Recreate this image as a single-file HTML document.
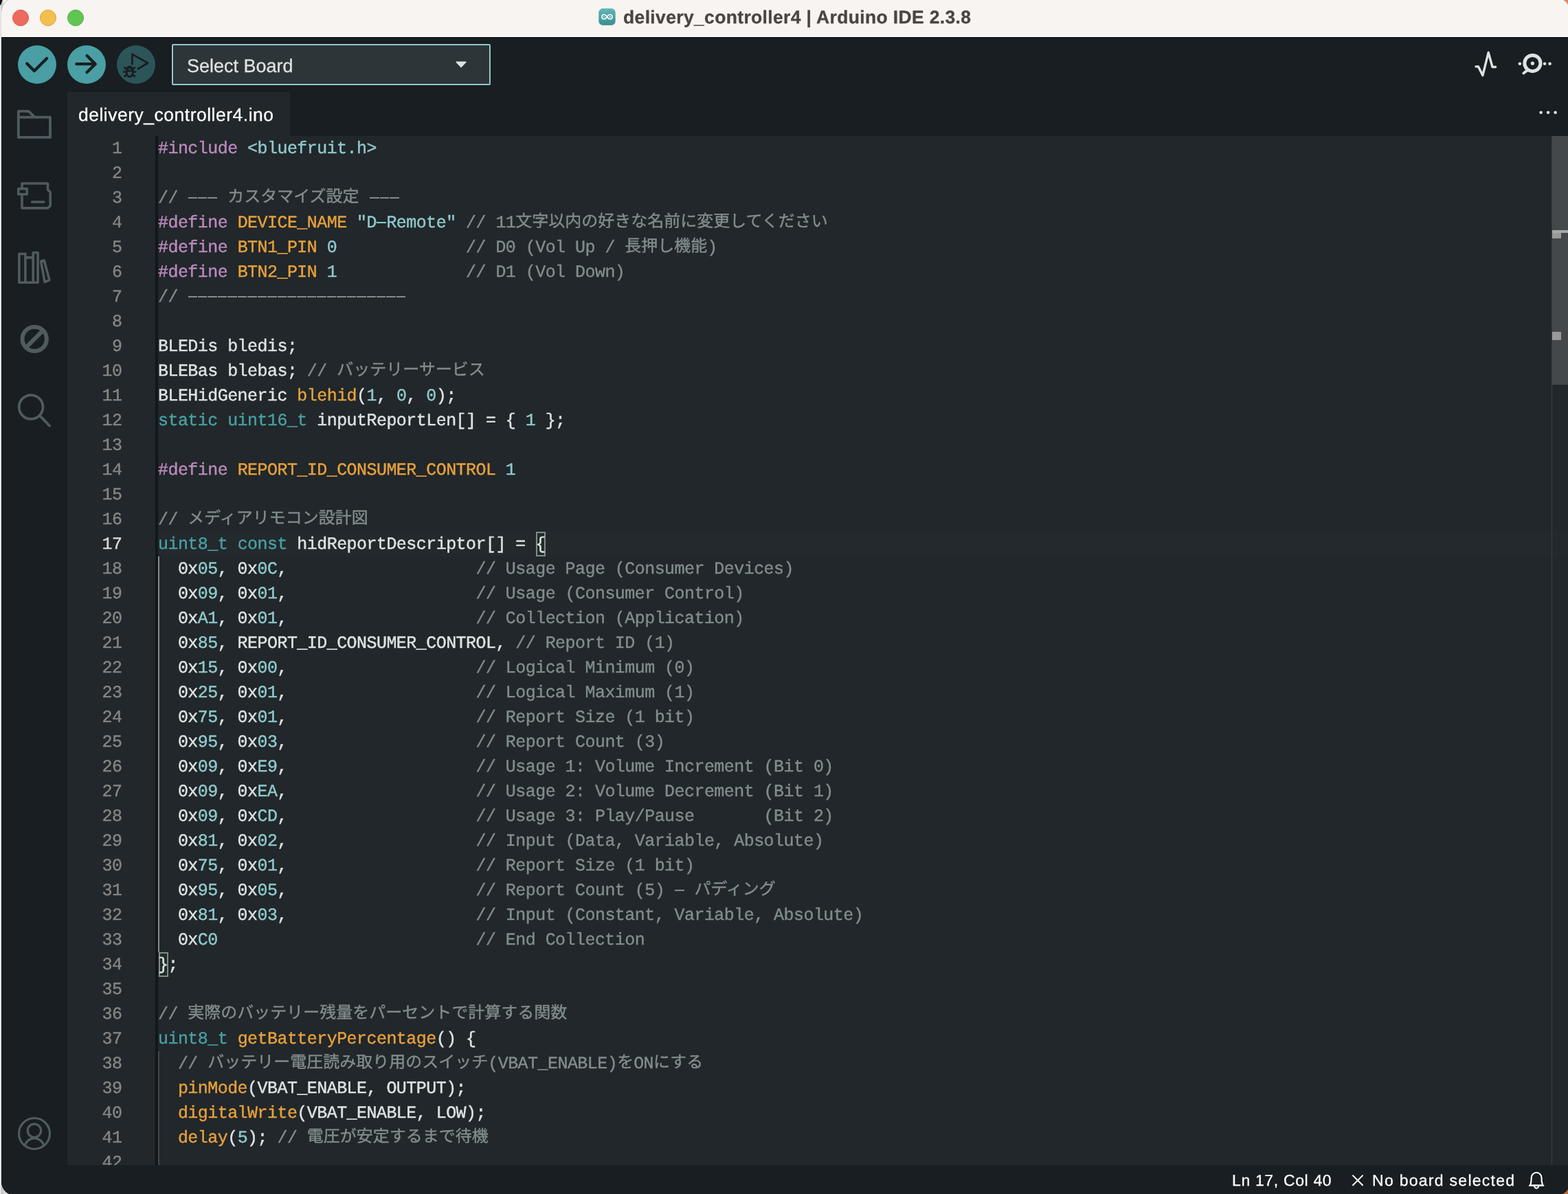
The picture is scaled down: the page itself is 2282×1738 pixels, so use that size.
<!DOCTYPE html>
<html lang="en">
<head>
<meta charset="utf-8">
<title>delivery_controller4 | Arduino IDE 2.3.8</title>
<style>
*{box-sizing:border-box;margin:0;padding:0}
html,body{width:2282px;height:1738px;overflow:hidden}
body{text-rendering:geometricPrecision;position:relative;font-family:"Liberation Sans",sans-serif;background:#d6d6d6;-webkit-font-smoothing:antialiased}
/* desktop / other window peeking behind */
#behind-l{position:absolute;left:0;top:0;width:24px;height:1738px;background:linear-gradient(90deg,#f8f8f8 0,#c2c2c2 2.500px,rgba(210,210,210,0) 6px),linear-gradient(180deg,#f6f6f6 0,#f6f6f6 30px,#d6d6d6 220px)}
#behind-mark{position:absolute;left:-3px;top:-5px;width:6px;height:13px;background:#111;border-radius:3px;transform:rotate(18deg)}
#behind-r{position:absolute;right:0;top:0;width:30px;height:40px;background:#e08a5c}
#behind-br{position:absolute;right:0;bottom:0;width:30px;height:40px;background:#c4673a}
#win{position:absolute;left:2px;top:-3px;width:2283px;height:1743px;border-radius:20px;overflow:hidden;background:#181e21}
/* everything inside #win is positioned in page coordinates via #pg */
#pg{position:absolute;left:-2px;top:3px;width:2290px;height:1745px}
#titlebar{position:absolute;left:0;top:-3px;width:2290px;height:56px;background:#f8f4f1}
#tb-hi{position:absolute;left:0;top:53px;width:2290px;height:1px;background:#fdfcfb}
#tb-sep{position:absolute;left:0;top:54px;width:2290px;height:1px;background:#000}
.tl{position:absolute;top:14px;width:24px;height:24px;border-radius:50%}
#tl-r{left:18px;background:#ed6a5e;border:1px solid #d8574b}
#tl-y{left:58px;background:#f4bf4f;border:1px solid #d9a33c}
#tl-g{left:98px;background:#61c554;border:1px solid #4fae43}
#title{position:absolute;left:907.300px;top:8.500px;height:32px;line-height:32px;font-size:26.5px;letter-spacing:0.35px;font-weight:bold;color:#484543;-webkit-text-stroke:0.3px #484543;white-space:nowrap}
#appicon{position:absolute;left:871px;top:12px;width:25px;height:25px}
#toolbar{position:absolute;left:0;top:55px;width:2290px;height:79px;background:#181e21}
.cbtn{position:absolute;top:66px;width:56px;height:56px;border-radius:50%;background:#499fa4}
.cbtn svg{position:absolute;left:0;top:0}
#b-verify{left:26px}
#b-upload{left:98px}
#b-debug{left:170px;background:#2c5559}
#board,#tab,#status{-webkit-text-stroke:0.25px}
#board{position:absolute;left:250px;top:64px;width:464px;height:60px;border:2px solid #90c9cc;border-radius:2px;background:#2e3539;color:#dce3e3;font-size:27px;line-height:60px;padding-left:20px;white-space:nowrap}
#board svg{position:absolute;left:411.400px;top:23.200px}
#activity{position:absolute;left:0;top:134px;width:98px;height:1562px;background:#181e21}
#activity svg{position:absolute}
#tabbar{position:absolute;left:98px;top:134px;width:2192px;height:64px;background:#181e21}
#tab{position:absolute;left:0;top:0;width:324px;height:64px;background:#21272a;color:#fff;font-size:26.5px;letter-spacing:0.5px;line-height:66px;padding-left:16px;white-space:nowrap}
#editor{position:absolute;left:98px;top:198px;width:2184px;height:1498px;background:#21272a;overflow:hidden}
#gutterbar{position:absolute;left:128px;top:0;width:4px;height:1498px;background:#11171a}
.guide{position:absolute;left:132px;width:2px}
#curline{position:absolute;left:132px;top:576px;width:2052px;height:36px;background:#23292c}
#rows{position:absolute;left:0;top:0;width:2160px;height:1498px;will-change:transform}
.g{will-change:transform}
.row{position:absolute;left:0;height:36px;width:2160px;white-space:pre;font-family:"Liberation Mono",monospace;font-size:25px;line-height:36px;letter-spacing:-0.55px;color:#dce3e3;-webkit-text-stroke:0.4px}
.ln{position:absolute;left:0;top:1.4px;width:79.5px;text-align:right;color:#858585}
.ln.cur{color:#d6d6d6}
.cl{position:absolute;left:132px;top:1.4px}
.p{color:#bc89bd}.f{color:#e7a03c}.s{color:#90c9cc}.c{color:#818c8d}.t{color:#499fa4}
.bm{position:relative;display:inline-block;height:36px;vertical-align:top}
.bm::before{content:"";box-sizing:border-box;position:absolute;left:0.500px;top:-1.400px;width:14.45px;height:36px;border:2px solid #888;background:#1f2d27;z-index:-1}
.h{color:transparent;background-image:repeating-linear-gradient(90deg,transparent 0,transparent 0.5px,#818c8d 0.5px,#818c8d 13.95px,transparent 13.95px,transparent 14.45px);background-size:100% 2.2px;background-position:0 13.1px;background-repeat:no-repeat}
.s .h{background-image:repeating-linear-gradient(90deg,transparent 0,transparent 0.5px,#90c9cc 0.5px,#90c9cc 13.95px,transparent 13.95px,transparent 14.45px)}
.j{display:inline-block;height:36px;vertical-align:top;position:relative;letter-spacing:0;font-family:"Liberation Mono","Noto Sans CJK JP",monospace;font-size:24px;line-height:36px;white-space:nowrap;overflow:visible}
#scroll{position:absolute;left:2160px;top:0;width:24px;height:1498px;border-left:1px solid #3a4043}
#thumb{position:absolute;left:0;top:0;width:24px;height:362px;background:#44484b}
.mk{position:absolute;left:0;width:13px;height:12px;background:#999}
#status{position:absolute;left:0;top:1696px;width:2290px;height:50px;background:#181e21;color:#fff;font-size:23px}
#status span{position:absolute;top:0;line-height:44px;white-space:nowrap}
#status svg{position:absolute}
</style>
</head>
<body>
<div id="behind-l"></div><div id="behind-mark"></div><div id="behind-r"></div><div id="behind-br"></div>
<div id="win"><div id="pg">
<div id="titlebar"></div><div id="tb-hi"></div><div id="tb-sep"></div>
<div class="tl" id="tl-r"></div><div class="tl" id="tl-y"></div><div class="tl" id="tl-g"></div>
<svg id="appicon" viewBox="0 0 25 25"><defs><linearGradient id="ag" x1="0" y1="0" x2="0" y2="1"><stop offset="0" stop-color="#62b6b7"/><stop offset="1" stop-color="#3a8d92"/></linearGradient></defs><rect x="0.3" y="0.3" width="24.4" height="24.4" rx="6" fill="url(#ag)"/><path d="M12.5 12.5c-1.2-2-2.6-3.2-4.4-3.2a3.2 3.2 0 0 0 0 6.400c1.8 0 3.200-1.200 4.400-3.200s2.600-3.200 4.400-3.200a3.200 3.200 0 0 1 0 6.400c-1.800 0-3.200-1.200-4.400-3.200z" fill="none" stroke="#fff" stroke-width="1.5"/><path d="M6.900 12.500h2.400M15.700 12.500h2.400M16.900 11.300v2.400" stroke="#fff" stroke-width="0.900" fill="none"/></svg>
<div id="title" class="g">delivery_controller4 | Arduino IDE 2.3.8</div>
<div id="toolbar"></div>
<div class="cbtn" id="b-verify"><svg width="56" height="56" viewBox="0 0 56 56"><path d="M13.200 26.600L23.900 37.300L42.100 19.100" fill="none" stroke="#181e21" stroke-width="4.300" stroke-linecap="round" stroke-linejoin="round"/></svg></div>
<div class="cbtn" id="b-upload"><svg width="56" height="56" viewBox="0 0 56 56"><path d="M13.300 27.200H40.600M28.500 15.100L40.800 27.200L28.500 39.300" fill="none" stroke="#181e21" stroke-width="4.200" stroke-linecap="round" stroke-linejoin="round"/></svg></div>
<div class="cbtn" id="b-debug"><svg width="56" height="56" viewBox="0 0 56 56"><g fill="none" stroke="#181e21" stroke-width="2.800" stroke-linecap="round" stroke-linejoin="round"><path d="M22.400 27.200V12.900L45.200 25.800L30.900 34.300"/><ellipse cx="18.700" cy="39.200" rx="4.600" ry="6.600"/><path d="M14.200 37.200H23.200M10.200 38.600H13.900M23.500 38.600H27.200M11.400 32.400L14.400 34.800M26 32.400L23 34.800M11.400 45L14.400 42.800M26 45L23 42.800"/><path d="M15.200 33.600A3.600 3.200 0 0 1 22.200 33.600"/></g></svg></div>
<div id="board"><span class="g" style="display:inline-block">Select Board</span><svg width="17.1" height="10.45" viewBox="0 0 18 11"><path d="M1.200 0.600H15.800a0.800 0.800 0 0 1 0.600 1.300L9.100 9.600a0.800 0.800 0 0 1-1.200 0L0.600 1.900A0.800 0.800 0 0 1 1.200 0.600z" fill="#dce3e3"/></svg></div>
<svg id="plot" style="position:absolute;left:2140px;top:70px" width="44" height="46" viewBox="2140 70 44 46"><path d="M2148 96.900H2151.500L2157.900 109.700L2166.200 76.400L2172 97.500H2176.600" fill="none" stroke="#dce3e3" stroke-width="3.400" stroke-linecap="round" stroke-linejoin="round"/></svg>
<svg id="mon" style="position:absolute;left:2206px;top:72px" width="56" height="40" viewBox="2206 72 56 40"><circle cx="2230.400" cy="92.050" r="11.600" fill="none" stroke="#dce3e3" stroke-width="5"/><circle cx="2230.400" cy="92.200" r="2.600" fill="#dce3e3"/><circle cx="2211.900" cy="92.800" r="2.300" fill="#dce3e3"/><circle cx="2248.100" cy="92.800" r="2.300" fill="#dce3e3"/><circle cx="2255.600" cy="92.800" r="2.300" fill="#dce3e3"/><path d="M2222.500 102.700L2217.400 106.500" stroke="#dce3e3" stroke-width="4" stroke-linecap="round"/></svg>
<div id="activity">
<svg style="left:0;top:0" width="98" height="520" viewBox="0 134 98 520"><g fill="none" stroke="#505b60" stroke-width="3.800" stroke-linejoin="round" stroke-linecap="round">
<path d="M26.800 161.900H41.600L50.700 170.600H73V199.900H26.800ZM26.800 170.600H50.700"/>
<path d="M32 273V267H69.500V276.100L73.200 279.800V299.600L69.500 302.900H32V284.600M26.800 274.700H39.200V282.800H26.800ZM46.600 294H63.900" stroke-width="3.600"/>
<path d="M27.900 369.500H36.900V411.200H27.900ZM36.900 374.900H48.200M36.900 411.200H48.200M48.200 367.700H55.100V411.200H48.200ZM59.500 380.200L64.300 379L71.900 407.600L65.100 410.500Z" stroke-width="3.600"/>
<circle cx="50.200" cy="493.400" r="17.700" stroke-width="6"/><path d="M37.800 505.800L62.600 481" stroke-width="6" stroke-linecap="butt"/>
<circle cx="45.100" cy="592.500" r="17.400"/><path d="M58.200 605.400L72.100 619.800"/>
</g></svg>
<svg style="left:0;top:1486px" width="98" height="60" viewBox="0 1620 98 60"><g fill="none" stroke="#505b60" stroke-width="3.200"><circle cx="50" cy="1650" r="22.500"/><circle cx="49.900" cy="1645.800" r="9.700"/><path d="M36.300 1667A14.300 14.300 0 0 1 63.700 1667"/></g></svg>
</div>
<div id="tabbar"><div id="tab"><span class="g" style="display:inline-block">delivery_controller4.ino</span></div>
<svg style="position:absolute;left:2138px;top:24px" width="34" height="12" viewBox="2236 158 34 12"><circle cx="2242.600" cy="163.800" r="2.300" fill="#dce3e3"/><circle cx="2253.100" cy="163.800" r="2.300" fill="#dce3e3"/><circle cx="2263.600" cy="163.800" r="2.300" fill="#dce3e3"/></svg>
</div>
<div id="editor">
<div id="gutterbar"></div>
<div id="curline"></div>
<div class="guide" style="top:612px;height:576px;background:#8a8a8a"></div>
<div class="guide" style="top:1332px;height:180px;background:#484848"></div>
<div id="rows">
<div class="row" style="top:0px"><span class="ln">1</span><span class="cl"><span class="p">#include</span> <span class="s">&lt;bluefruit.h&gt;</span></span></div>
<div class="row" style="top:36px"><span class="ln">2</span><span class="cl"></span></div>
<div class="row" style="top:72px"><span class="ln">3</span><span class="cl"><span class="c">// <span class="h">---</span> <span class="j" style="width:192px">カスタマイズ設定</span> <span class="h">---</span></span></span></div>
<div class="row" style="top:108px"><span class="ln">4</span><span class="cl"><span class="p">#define</span> <span class="f">DEVICE_NAME</span> <span class="s">"D<span class="h">-</span>Remote"</span> <span class="c">// 11<span class="j" style="width:456px">文字以内の好きな名前に変更してください</span></span></span></div>
<div class="row" style="top:144px"><span class="ln">5</span><span class="cl"><span class="p">#define</span> <span class="f">BTN1_PIN</span> <span class="s">0</span>             <span class="c">// D0 (Vol Up / <span class="j" style="width:120px">長押し機能</span>)</span></span></div>
<div class="row" style="top:180px"><span class="ln">6</span><span class="cl"><span class="p">#define</span> <span class="f">BTN2_PIN</span> <span class="s">1</span>             <span class="c">// D1 (Vol Down)</span></span></div>
<div class="row" style="top:216px"><span class="ln">7</span><span class="cl"><span class="c">// <span class="h">----------------------</span></span></span></div>
<div class="row" style="top:252px"><span class="ln">8</span><span class="cl"></span></div>
<div class="row" style="top:288px"><span class="ln">9</span><span class="cl">BLEDis bledis;</span></div>
<div class="row" style="top:324px"><span class="ln">10</span><span class="cl">BLEBas blebas; <span class="c">// <span class="j" style="width:216px">バッテリーサービス</span></span></span></div>
<div class="row" style="top:360px"><span class="ln">11</span><span class="cl">BLEHidGeneric <span class="f">blehid</span>(<span class="s">1</span>, <span class="s">0</span>, <span class="s">0</span>);</span></div>
<div class="row" style="top:396px"><span class="ln">12</span><span class="cl"><span class="t">static</span> <span class="t">uint16_t</span> inputReportLen[] = { <span class="s">1</span> };</span></div>
<div class="row" style="top:432px"><span class="ln">13</span><span class="cl"></span></div>
<div class="row" style="top:468px"><span class="ln">14</span><span class="cl"><span class="p">#define</span> <span class="f">REPORT_ID_CONSUMER_CONTROL</span> <span class="s">1</span></span></div>
<div class="row" style="top:504px"><span class="ln">15</span><span class="cl"></span></div>
<div class="row" style="top:540px"><span class="ln">16</span><span class="cl"><span class="c">// <span class="j" style="width:264px">メディアリモコン設計図</span></span></span></div>
<div class="row" style="top:576px"><span class="ln cur">17</span><span class="cl"><span class="t">uint8_t</span> <span class="t">const</span> hidReportDescriptor[] = <span class="bm">{</span></span></div>
<div class="row" style="top:612px"><span class="ln">18</span><span class="cl">  0x<span class="s">05</span>, 0x<span class="s">0C</span>,                   <span class="c">// Usage Page (Consumer Devices)</span></span></div>
<div class="row" style="top:648px"><span class="ln">19</span><span class="cl">  0x<span class="s">09</span>, 0x<span class="s">01</span>,                   <span class="c">// Usage (Consumer Control)</span></span></div>
<div class="row" style="top:684px"><span class="ln">20</span><span class="cl">  0x<span class="s">A1</span>, 0x<span class="s">01</span>,                   <span class="c">// Collection (Application)</span></span></div>
<div class="row" style="top:720px"><span class="ln">21</span><span class="cl">  0x<span class="s">85</span>, REPORT_ID_CONSUMER_CONTROL, <span class="c">// Report ID (1)</span></span></div>
<div class="row" style="top:756px"><span class="ln">22</span><span class="cl">  0x<span class="s">15</span>, 0x<span class="s">00</span>,                   <span class="c">// Logical Minimum (0)</span></span></div>
<div class="row" style="top:792px"><span class="ln">23</span><span class="cl">  0x<span class="s">25</span>, 0x<span class="s">01</span>,                   <span class="c">// Logical Maximum (1)</span></span></div>
<div class="row" style="top:828px"><span class="ln">24</span><span class="cl">  0x<span class="s">75</span>, 0x<span class="s">01</span>,                   <span class="c">// Report Size (1 bit)</span></span></div>
<div class="row" style="top:864px"><span class="ln">25</span><span class="cl">  0x<span class="s">95</span>, 0x<span class="s">03</span>,                   <span class="c">// Report Count (3)</span></span></div>
<div class="row" style="top:900px"><span class="ln">26</span><span class="cl">  0x<span class="s">09</span>, 0x<span class="s">E9</span>,                   <span class="c">// Usage 1: Volume Increment (Bit 0)</span></span></div>
<div class="row" style="top:936px"><span class="ln">27</span><span class="cl">  0x<span class="s">09</span>, 0x<span class="s">EA</span>,                   <span class="c">// Usage 2: Volume Decrement (Bit 1)</span></span></div>
<div class="row" style="top:972px"><span class="ln">28</span><span class="cl">  0x<span class="s">09</span>, 0x<span class="s">CD</span>,                   <span class="c">// Usage 3: Play/Pause       (Bit 2)</span></span></div>
<div class="row" style="top:1008px"><span class="ln">29</span><span class="cl">  0x<span class="s">81</span>, 0x<span class="s">02</span>,                   <span class="c">// Input (Data, Variable, Absolute)</span></span></div>
<div class="row" style="top:1044px"><span class="ln">30</span><span class="cl">  0x<span class="s">75</span>, 0x<span class="s">01</span>,                   <span class="c">// Report Size (1 bit)</span></span></div>
<div class="row" style="top:1080px"><span class="ln">31</span><span class="cl">  0x<span class="s">95</span>, 0x<span class="s">05</span>,                   <span class="c">// Report Count (5) <span class="h">-</span> <span class="j" style="width:120px">パディング</span></span></span></div>
<div class="row" style="top:1116px"><span class="ln">32</span><span class="cl">  0x<span class="s">81</span>, 0x<span class="s">03</span>,                   <span class="c">// Input (Constant, Variable, Absolute)</span></span></div>
<div class="row" style="top:1152px"><span class="ln">33</span><span class="cl">  0x<span class="s">C0</span>                          <span class="c">// End Collection</span></span></div>
<div class="row" style="top:1188px"><span class="ln">34</span><span class="cl"><span class="bm">}</span>;</span></div>
<div class="row" style="top:1224px"><span class="ln">35</span><span class="cl"></span></div>
<div class="row" style="top:1260px"><span class="ln">36</span><span class="cl"><span class="c">// <span class="j" style="width:552px">実際のバッテリー残量をパーセントで計算する関数</span></span></span></div>
<div class="row" style="top:1296px"><span class="ln">37</span><span class="cl"><span class="t">uint8_t</span> <span class="f">getBatteryPercentage</span>() {</span></div>
<div class="row" style="top:1332px"><span class="ln">38</span><span class="cl">  <span class="c">// <span class="j" style="width:408px">バッテリー電圧読み取り用のスイッチ</span>(VBAT_ENABLE)<span class="j" style="width:24px">を</span>ON<span class="j" style="width:72px">にする</span></span></span></div>
<div class="row" style="top:1368px"><span class="ln">39</span><span class="cl">  <span class="f">pinMode</span>(VBAT_ENABLE, OUTPUT);</span></div>
<div class="row" style="top:1404px"><span class="ln">40</span><span class="cl">  <span class="f">digitalWrite</span>(VBAT_ENABLE, LOW);</span></div>
<div class="row" style="top:1440px"><span class="ln">41</span><span class="cl">  <span class="f">delay</span>(<span class="s">5</span>); <span class="c">// <span class="j" style="width:264px">電圧が安定するまで待機</span></span></span></div>
<div class="row" style="top:1476px"><span class="ln">42</span><span class="cl"></span></div>
</div>
<div id="scroll"><div id="thumb"></div><div class="mk" style="top:137px"></div><div style="position:absolute;left:0;top:137px;width:24px;height:4px;background:#a8a8a8"></div><div class="mk" style="top:285px"></div></div>
</div>
<div id="status">
<span class="g" style="left:1793px;letter-spacing:0.65px">Ln 17, Col 40</span>
<svg style="left:1966px;top:12px" width="20" height="20" viewBox="0 0 20 20"><path d="M2.400 2.600L17.600 17.800M17.600 2.600L2.400 17.800" stroke="#fff" stroke-width="2" fill="none"/></svg>
<span class="g" style="left:1997px;letter-spacing:1.28px">No board selected</span>
<svg style="left:2222px;top:6px" width="28" height="32" viewBox="2222 1702 28 32"><path d="M2226.900 1725.300C2228.200 1722.500 2228.700 1719.500 2228.700 1714.300A7.400 7.600 0 0 1 2243.500 1714.300C2243.500 1719.500 2244 1722.500 2245.300 1725.300ZM2225.800 1725.800H2246.400M2233 1726.300A3.100 3.300 0 0 0 2239.200 1726.300" fill="none" stroke="#fff" stroke-width="2.100" stroke-linejoin="round" stroke-linecap="round"/></svg>
</div>
</div></div>
</body>
</html>
